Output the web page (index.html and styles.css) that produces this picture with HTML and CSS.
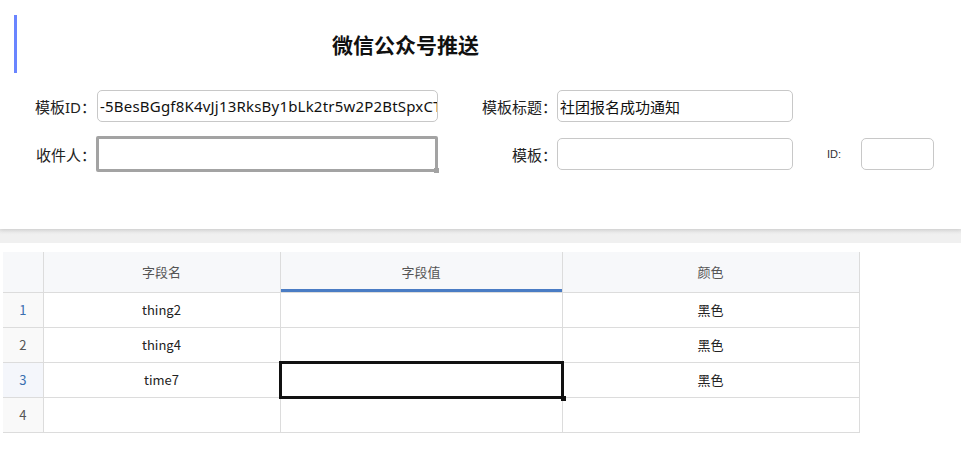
FILE: index.html
```html
<!DOCTYPE html>
<html lang="zh">
<head>
<meta charset="utf-8">
<link rel="stylesheet" href="styles.css">
</head>
<body>
<div class="panel">
  <div class="head">
    <div class="bar"></div>
    <h1 class="title">微信公众号推送</h1>
  </div>
  <div class="form">
    <label class="lbl l1">模板ID：</label>
    <div class="inp"><span class="val latin">-5BesBGgf8K4vJj13RksBy1bLk2tr5w2P2BtSpxCT</span></div>
    <label class="lbl l2">模板标题：</label>
    <div class="inp"><span class="val">社团报名成功通知</span></div>
    <div></div><div></div>

    <label class="lbl l1">收件人：</label>
    <div class="inp focus"><span class="handle"></span></div>
    <label class="lbl l2">模板：</label>
    <div class="inp"></div>
    <label class="lbl l3">ID:</label>
    <div class="inp"></div>
  </div>
</div>
<div class="sep"></div>
<div class="grid-wrap">
  <table class="grid">
    <colgroup>
      <col class="c0"><col class="c1"><col class="c2"><col class="c3">
    </colgroup>
    <thead>
      <tr><th class="rn"></th><th>字段名</th><th class="active">字段值</th><th>颜色</th></tr>
    </thead>
    <tbody>
      <tr><td class="rn blue">1</td><td>thing2</td><td></td><td>黑色</td></tr>
      <tr><td class="rn">2</td><td>thing4</td><td></td><td>黑色</td></tr>
      <tr><td class="rn blue sel-row">3</td><td>time7</td><td class="selected"></td><td>黑色</td></tr>
      <tr><td class="rn">4</td><td></td><td></td><td></td></tr>
    </tbody>
  </table>
</div>
</body>
</html>
```
FILE: styles.css
```css
* { box-sizing: border-box; }
html, body { margin: 0; padding: 0; background: #fff; }
body {
  font-family: "Noto Sans CJK SC", "Noto Sans", sans-serif;
  color: #222;
  width: 961px;
  height: 449px;
  overflow: hidden;
}
.panel {
  background: #fff;
  height: 229px;
  padding-top: 15px;
  box-shadow: 0 1px 4px rgba(0,0,0,0.12);
  position: relative;
}
.head {
  display: flex;
  align-items: center;
  height: 58px;
}
.bar {
  width: 3px;
  height: 58px;
  margin-left: 14px;
  background: #6a85ff;
}
.title {
  margin: 0;
  flex: 0 0 auto;
  margin-left: 315px;
  font-size: 21px;
  font-weight: 700;
  color: #111;
}
.form {
  display: grid;
  grid-template-columns: 97px 341px 119px 236px 68px 73px;
  grid-auto-rows: 32px;
  row-gap: 16px;
  margin-top: 17px;
  align-items: center;
}
.lbl {
  font-family: "Noto Sans", "Noto Sans CJK SC", sans-serif;
  font-size: 15px;
  color: #222;
  text-align: right;
  padding-right: 1px;
}
.l2 { padding-right: 0; }
.l3 {
  text-align: left;
  padding-left: 34px;
  font-size: 11px;
  font-family: "Liberation Sans", Arial, sans-serif;
  color: #333;
}
.inp {
  height: 32px;
  border: 1px solid #c8c8c8;
  border-radius: 5px;
  background: #fff;
  overflow: hidden;
  white-space: nowrap;
  display: flex;
  align-items: center;
  padding-left: 2px;
  font-size: 15px;
  color: #111;
  position: relative;
}
.val { display: block; }
.val.latin {
  font-family: "Noto Sans", "Noto Sans CJK SC", sans-serif;
  font-size: 15px;
  letter-spacing: 0.2px;
}
.inp.focus {
  height: 36px;
  margin-left: -1px;
  border: 3px solid #a3a3a3;
  border-radius: 2px;
  overflow: visible;
}
.handle {
  position: absolute;
  right: -4px;
  bottom: -4px;
  width: 5px;
  height: 5px;
  background: #a3a3a3;
}
.sep {
  height: 14px;
  background: linear-gradient(#e6e6e6, #f0f0f0 40%, #f0f0f0);
}
.grid-wrap {
  padding: 9px 0 0 3px;
}
.grid {
  border-collapse: collapse;
  table-layout: fixed;
  width: 856px;
  font-size: 13px;
}
.c0 { width: 40px; }
.c1 { width: 237px; }
.c2 { width: 282px; }
.c3 { width: 297px; }
.grid th, .grid td {
  border: 1px solid #dcdcdc;
  text-align: center;
  padding: 0;
}
.grid tr > :first-child { border-left: none; }
.grid thead th { border-top: none; }
.grid th {
  height: 40px;
  background: #f7f8fa;
  font-weight: 400;
  color: #555;
}
.grid th.active {
  box-shadow: inset 0 -3px 0 #4a7cc4;
}
.grid td {
  height: 35px;
  color: #222;
}
.grid td.rn {
  background: #f9f9f9;
  color: #555;
}
.grid td.rn.blue { color: #3a6fb0; }
.grid td.rn.sel-row { background: #f4f6fb; }
.grid td.selected { position: relative; }
.grid td.selected::after {
  content: "";
  position: absolute;
  left: -2px;
  top: -2px;
  right: -2px;
  bottom: -2px;
  border: 3px solid #111;
}
.grid td.selected::before {
  content: "";
  position: absolute;
  right: -4px;
  bottom: -4px;
  width: 5px;
  height: 5px;
  background: #111;
  z-index: 1;
}
```
